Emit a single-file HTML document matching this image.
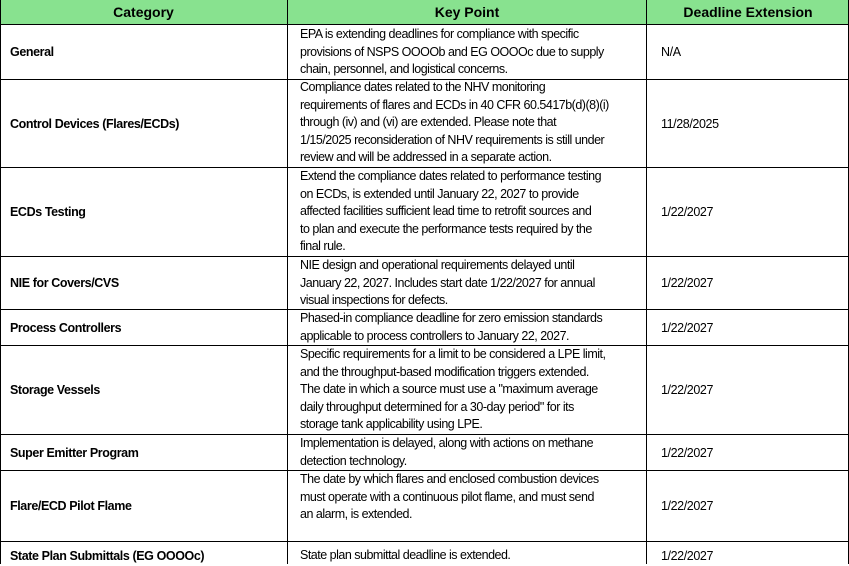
<!DOCTYPE html>
<html><head><style>
body{margin:0;width:849px;height:564px;overflow:hidden;background:#fff;font-family:"Liberation Sans",Arial,sans-serif;color:#000;position:relative}
.h{position:absolute;top:0;height:24px;background:#88e28f;border-bottom:1px solid #000;font-weight:bold;font-size:14px;line-height:24px;text-align:center}
.hl{position:absolute;left:0;width:849px;height:1px;background:#000}
.vl{position:absolute;top:0;width:1px;height:564px;background:#000}
.c{position:absolute;font-size:12.5px;letter-spacing:-0.4px;white-space:nowrap;display:flex;align-items:center}
.k{position:absolute;left:300px;font-size:12.5px;letter-spacing:-0.5px;line-height:17.6px;white-space:nowrap}
.b{font-weight:bold;left:10px}
.d{left:661px}
</style></head><body>
<div class="h" style="left:0;width:287px">Category</div>
<div class="h" style="left:288px;width:358px">Key Point</div>
<div class="h" style="left:647px;width:202px">Deadline Extension</div>
<div class="vl" style="left:0"></div>
<div class="vl" style="left:287px"></div>
<div class="vl" style="left:646px"></div>
<div class="vl" style="left:848px"></div>
<div class="hl" style="top:24px"></div>
<div class="hl" style="top:79px"></div>
<div class="hl" style="top:167px"></div>
<div class="hl" style="top:256px"></div>
<div class="hl" style="top:309px"></div>
<div class="hl" style="top:345px"></div>
<div class="hl" style="top:434px"></div>
<div class="hl" style="top:470px"></div>
<div class="hl" style="top:541px"></div>

<div class="c b" style="top:25px;height:54px">General</div>
<div class="k" style="top:26px">EPA is extending deadlines for compliance with specific<br>provisions of NSPS OOOOb and EG OOOOc due to supply<br>chain, personnel, and logistical concerns.</div>
<div class="c d" style="top:25px;height:54px">N/A</div>

<div class="c b" style="top:80px;height:87px">Control Devices (Flares/ECDs)</div>
<div class="k" style="top:79px">Compliance dates related to the NHV monitoring<br>requirements of flares and ECDs in 40 CFR 60.5417b(d)(8)(i)<br>through (iv) and (vi) are extended. Please note that<br>1/15/2025 reconsideration of NHV requirements is still under<br>review and will be addressed in a separate action.</div>
<div class="c d" style="top:80px;height:87px">11/28/2025</div>

<div class="c b" style="top:168px;height:88px">ECDs Testing</div>
<div class="k" style="top:168px">Extend the compliance dates related to performance testing<br>on ECDs, is extended until January 22, 2027 to provide<br>affected facilities sufficient lead time to retrofit sources and<br>to plan and execute the performance tests required by the<br>final rule.</div>
<div class="c d" style="top:168px;height:88px">1/22/2027</div>

<div class="c b" style="top:257px;height:52px">NIE for Covers/CVS</div>
<div class="k" style="top:257px">NIE design and operational requirements delayed until<br>January 22, 2027. Includes start date 1/22/2027 for annual<br>visual inspections for defects.</div>
<div class="c d" style="top:257px;height:52px">1/22/2027</div>

<div class="c b" style="top:310px;height:35px">Process Controllers</div>
<div class="k" style="top:310px">Phased-in compliance deadline for zero emission standards<br>applicable to process controllers to January 22, 2027.</div>
<div class="c d" style="top:310px;height:35px">1/22/2027</div>

<div class="c b" style="top:346px;height:88px">Storage Vessels</div>
<div class="k" style="top:346px">Specific requirements for a limit to be considered a LPE limit,<br>and the throughput-based modification triggers extended.<br>The date in which a source must use a "maximum average<br>daily throughput determined for a 30-day period" for its<br>storage tank applicability using LPE.</div>
<div class="c d" style="top:346px;height:88px">1/22/2027</div>

<div class="c b" style="top:435px;height:35px">Super Emitter Program</div>
<div class="k" style="top:435px">Implementation is delayed, along with actions on methane<br>detection technology.</div>
<div class="c d" style="top:435px;height:35px">1/22/2027</div>

<div class="c b" style="top:471px;height:70px">Flare/ECD Pilot Flame</div>
<div class="k" style="top:471px">The date by which flares and enclosed combustion devices<br>must operate with a continuous pilot flame, and must send<br>an alarm, is extended.</div>
<div class="c d" style="top:471px;height:70px">1/22/2027</div>

<div class="c b" style="top:546px;height:20px">State Plan Submittals (EG OOOOc)</div>
<div class="k" style="top:547px">State plan submittal deadline is extended.</div>
<div class="c d" style="top:546px;height:20px">1/22/2027</div>
</body></html>
